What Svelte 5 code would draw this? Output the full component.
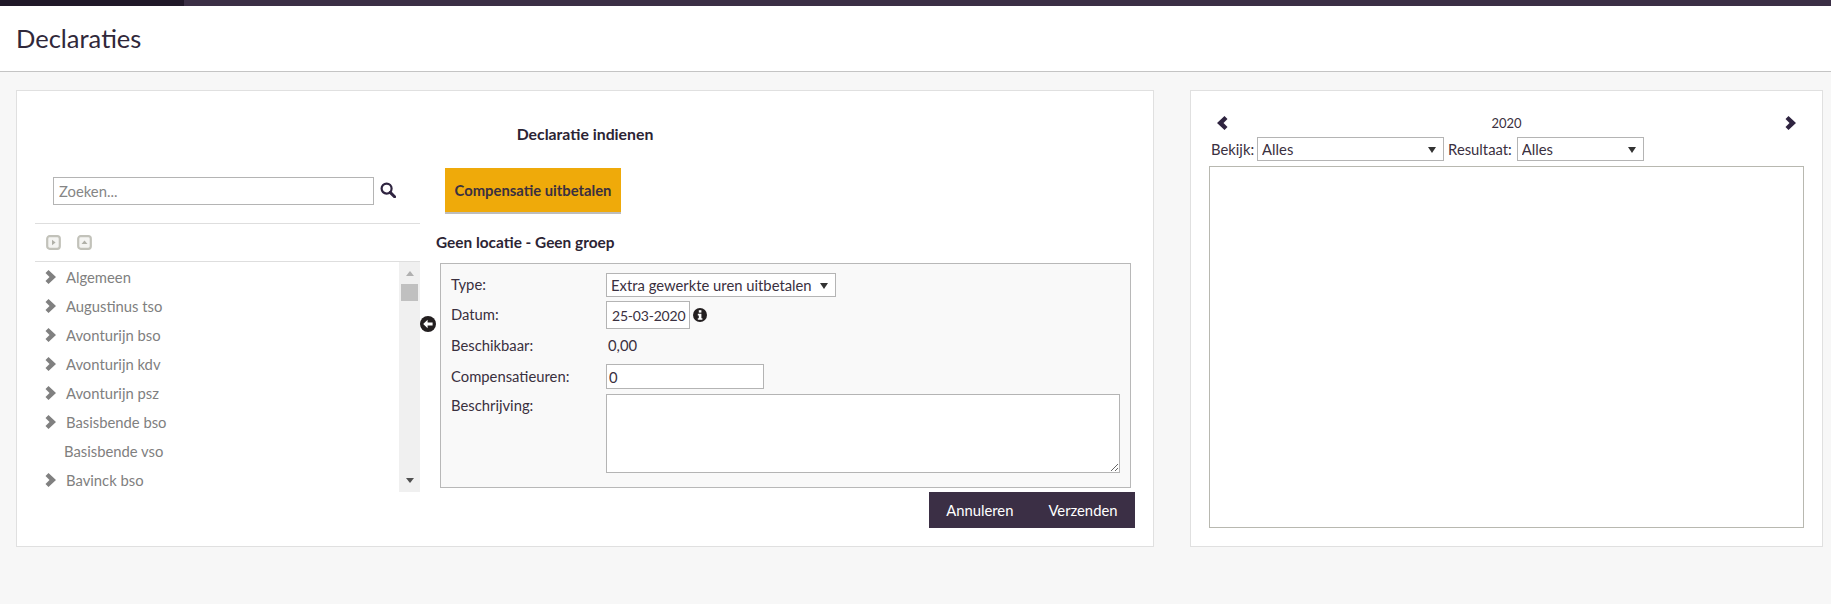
<script>
  const groups = [
    { name: 'Algemeen', children: true },
    { name: 'Augustinus tso', children: true },
    { name: 'Avonturijn bso', children: true },
    { name: 'Avonturijn kdv', children: true },
    { name: 'Avonturijn psz', children: true },
    { name: 'Basisbende bso', children: true },
    { name: 'Basisbende vso', children: false },
    { name: 'Bavinck bso', children: true }
  ];
</script>

{#snippet chevron(cls)}
  <svg class={cls} viewBox="0 0 11 14"><path d="M3.5 0 L11 7 L3.5 14 L0.5 11 L4.5 7 L0.5 3 Z" /></svg>
{/snippet}

<div class="topbar"><div class="topbar-active"></div></div>
<header class="header"><h1>Declaraties</h1></header>

<main class="page">
  <section class="card left">
    <h2 class="card-title">Declaratie indienen</h2>
    <div class="columns">
      <div class="tree-col">
        <div class="search">
          <input type="text" placeholder="Zoeken..." />
          <svg class="search-icon" viewBox="0 0 16 16">
            <circle cx="6.6" cy="6.6" r="5" fill="none" stroke="#2f2440" stroke-width="2.2" />
            <path d="M10.2 10.4 L14.6 14.8" stroke="#2f2440" stroke-width="3" stroke-linecap="round" />
          </svg>
        </div>
        <div class="tree-tools">
          <svg viewBox="0 0 15 15"><rect x="1.2" y="1.2" width="12.6" height="12.6" rx="2.5" fill="#f4f4f2" stroke="#c2c2ba" stroke-width="2.2" /><path d="M6 4.8 L9.6 7.5 L6 10.2 Z" fill="#b0b0a8" /></svg>
          <svg viewBox="0 0 15 15"><rect x="1.2" y="1.2" width="12.6" height="12.6" rx="2.5" fill="#f4f4f2" stroke="#c2c2ba" stroke-width="2.2" /><path d="M4.5 9 L7.5 5.6 L10.5 9 Z" fill="#b0b0a8" /></svg>
        </div>
        <div class="tree">
          <ul>
            {#each groups as group}
              <li class:leaf={!group.children}>
                {#if group.children}{@render chevron('tree-chevron')}{/if}
                <span>{group.name}</span>
              </li>
            {/each}
          </ul>
          <div class="scrollbar">
            <span class="arrow up"></span>
            <span class="thumb"></span>
            <span class="arrow down"></span>
          </div>
        </div>
      </div>

      <svg class="collapse" viewBox="0 0 16 16">
        <circle cx="8" cy="8" r="8" fill="#231f20" />
        <path d="M3.2 8 L7.6 3.8 L7.6 6.4 L12.6 6.4 L12.6 9.6 L7.6 9.6 L7.6 12.2 Z" fill="#fff" />
      </svg>

      <div class="form-col">
        <button class="orange">Compensatie uitbetalen</button>
        <h3>Geen locatie - Geen groep</h3>
        <div class="form-box">
          <div class="form-grid">
            <label for="type">Type:</label>
            <div class="select-wrap type-select">
              <select id="type"><option>Extra gewerkte uren uitbetalen</option></select>
            </div>
            <label for="datum">Datum:</label>
            <div class="date-row">
              <input id="datum" class="date" type="text" value="25-03-2020" />
              <svg class="info" viewBox="0 0 14 14">
                <circle cx="7" cy="7" r="7" fill="#231f20" />
                <rect x="5.8" y="2.2" width="2.6" height="2.4" fill="#fff" />
                <path d="M4.8 5.8 H8.4 V10.2 H9.4 V11.8 H4.8 V10.2 H5.8 V7.4 H4.8 Z" fill="#fff" />
              </svg>
            </div>
            <span class="avail">Beschikbaar:</span>
            <span class="avail value">0,00</span>
            <label for="uren">Compensatieuren:</label>
            <input id="uren" class="hours" type="text" value="0" />
            <label class="row-desc" for="desc">Beschrijving:</label>
            <textarea id="desc"></textarea>
          </div>
        </div>
        <div class="actions">
          <button>Annuleren</button>
          <button>Verzenden</button>
        </div>
      </div>
    </div>
  </section>

  <section class="card right">
    <div class="year-nav">
      {@render chevron('nav-chevron prev')}
      <span>2020</span>
      {@render chevron('nav-chevron')}
    </div>
    <div class="filters">
      <label for="bekijk">Bekijk:</label>
      <div class="select-wrap bekijk"><select id="bekijk"><option>Alles</option></select></div>
      <label class="result-label" for="resultaat">Resultaat:</label>
      <div class="select-wrap resultaat"><select id="resultaat"><option>Alles</option></select></div>
    </div>
    <div class="results"></div>
  </section>
</main>

<style>
  :global(body) {
    background: #f7f7f7;
    font-family: Lato, "Open Sans", sans-serif;
    font-size: 14.8px;
    color: #3a3040;
  }

  .topbar {
    height: 6px;
    background: #3b2f45;
  }

  .topbar-active {
    width: 184px;
    height: 100%;
    background: #201828;
  }

  .header {
    height: 66px;
    box-sizing: border-box;
    background: #fff;
    border-bottom: 1px solid #c4c4c4;
    padding-left: 16px;
    display: flex;
    align-items: center;
  }

  h1 {
    margin: 0 0 2px;
    font-size: 25.5px;
    font-weight: 400;
    color: #30283a;
  }

  .page {
    display: flex;
    gap: 36px;
    padding: 18px 8px 0 16px;
  }

  .card {
    height: 457px;
    box-sizing: border-box;
    background: #fff;
    border: 1px solid #e0e0e0;
  }

  .left {
    width: 1138px;
    flex: none;
    padding: 0 18px;
  }

  .right {
    flex: 1;
    padding: 0 18px;
  }

  .card-title {
    margin: 0;
    height: 77px;
    line-height: 85px;
    text-align: center;
    font-size: 15.8px;
    font-weight: 700;
    color: #2c2434;
  }

  .columns {
    display: flex;
    align-items: flex-start;
  }

  .tree-col {
    width: 385px;
    flex: none;
  }

  .search {
    display: flex;
    align-items: flex-start;
    gap: 6px;
    height: 46px;
    margin-top: 9px;
    padding-left: 18px;
    border-bottom: 1px solid #dedede;
  }

  input,
  select,
  textarea {
    box-sizing: border-box;
    border: 1px solid #b4b4b4;
    border-radius: 0;
    background: #fff;
    font: inherit;
    color: #3a3040;
    outline: none;
    margin: 0;
  }

  .search input {
    width: 321px;
    height: 28px;
    padding: 0 5px;
  }

  .search input::placeholder {
    color: #858585;
    opacity: 1;
  }

  .search-icon {
    width: 16px;
    height: 16px;
    margin-top: 5px;
  }

  .tree-tools {
    display: flex;
    gap: 16px;
    height: 38px;
    box-sizing: border-box;
    padding: 11px 0 0 11px;
    border-bottom: 1px solid #dedede;
  }

  .tree-tools svg {
    width: 15px;
    height: 15px;
  }

  .tree {
    display: flex;
    height: 230px;
  }

  ul {
    list-style: none;
    margin: 0;
    padding: 0 0 0 10px;
    flex: 1;
  }

  li {
    display: flex;
    align-items: center;
    gap: 10px;
    height: 29px;
    color: #808080;
  }

  li.leaf {
    padding-left: 19px;
  }

  .tree-chevron {
    width: 11px;
    height: 14px;
    fill: #808080;
  }

  .scrollbar {
    width: 21px;
    background: #f0f0f0;
    display: flex;
    flex-direction: column;
    align-items: center;
    position: relative;
  }

  .arrow {
    position: absolute;
    width: 0;
    height: 0;
    border-left: 4.5px solid transparent;
    border-right: 4.5px solid transparent;
  }

  .arrow.up {
    top: 9px;
    border-bottom: 5px solid #b0b0b0;
  }

  .arrow.down {
    bottom: 9px;
    border-top: 5px solid #505050;
  }

  .thumb {
    width: 17px;
    height: 17px;
    margin-top: 22px;
    background: #c0c0c0;
  }

  .collapse {
    width: 16px;
    height: 16px;
    flex: none;
    margin-top: 148px;
  }

  .form-col {
    width: 699px;
    flex: none;
  }

  button {
    font: inherit;
    border: 0;
    cursor: pointer;
  }

  .orange {
    display: block;
    width: 176px;
    height: 46px;
    margin-left: 9px;
    padding: 0;
    background: #efaa0a;
    border-bottom: 2px solid #bdbdbd;
    font-weight: 700;
    color: #3a3040;
  }

  h3 {
    margin: 0;
    height: 49px;
    line-height: 57px;
    font-size: 15.4px;
    font-weight: 700;
    color: #2c2434;
  }

  .form-box {
    width: 691px;
    height: 225px;
    box-sizing: border-box;
    margin-left: 4px;
    padding: 9px 10px 0 10px;
    background: #f9f9f9;
    border: 1px solid #b8b8b8;
  }

  .form-grid {
    display: grid;
    grid-template-columns: 155px 514px;
    grid-template-rows: 24px 28px 27px 25px 80px;
    row-gap: 4px;
    align-items: center;
  }

  .form-grid label {
    padding-bottom: 2px;
  }

  .form-grid .avail {
    padding-bottom: 4px;
  }

  .form-grid .row-desc {
    align-self: start;
    margin-top: 3px;
  }

  .value {
    padding-left: 2px;
  }

  .select-wrap {
    position: relative;
    height: 24px;
  }

  .select-wrap::after {
    content: '';
    position: absolute;
    top: 10px;
    right: 8px;
    border-left: 4px solid transparent;
    border-right: 4px solid transparent;
    border-top: 6px solid #333;
    pointer-events: none;
  }

  select {
    appearance: none;
    width: 100%;
    height: 100%;
    padding: 0 0 1px 4px;
    display: block;
  }

  .type-select {
    width: 230px;
  }

  .date-row {
    display: flex;
    align-items: center;
    gap: 3px;
  }

  .date {
    width: 84px;
    height: 28px;
    padding: 0 1px 0 5px;
    font-size: 14px;
    letter-spacing: -0.2px;
  }

  .info {
    width: 14px;
    height: 14px;
  }

  .hours {
    width: 158px;
    height: 25px;
    padding: 0 2px;
  }

  textarea {
    width: 514px;
    height: 79px;
    display: block;
    align-self: end;
  }

  .actions {
    display: flex;
    justify-content: flex-end;
    margin-top: 4px;
  }

  .actions button {
    height: 36px;
    padding: 0 17.5px;
    background: #3b2f45;
    color: #fff;
  }

  .year-nav {
    display: flex;
    justify-content: space-between;
    align-items: center;
    height: 24px;
    margin-top: 20px;
    padding: 0 8px;
    font-size: 13px;
  }

  .nav-chevron {
    width: 11px;
    height: 14px;
    fill: #2f2440;
  }

  .nav-chevron.prev {
    transform: scaleX(-1);
  }

  .filters {
    display: flex;
    align-items: center;
    gap: 3px;
    height: 24px;
    margin: 2px 0 5px;
    padding-left: 2px;
  }

  .result-label {
    margin: 0 2px 0 1px;
  }

  .bekijk {
    width: 187px;
  }

  .resultaat {
    width: 127px;
  }

  .results {
    width: 595px;
    height: 362px;
    box-sizing: border-box;
    background: #fff;
    border: 1px solid #b8b8b0;
  }
</style>
